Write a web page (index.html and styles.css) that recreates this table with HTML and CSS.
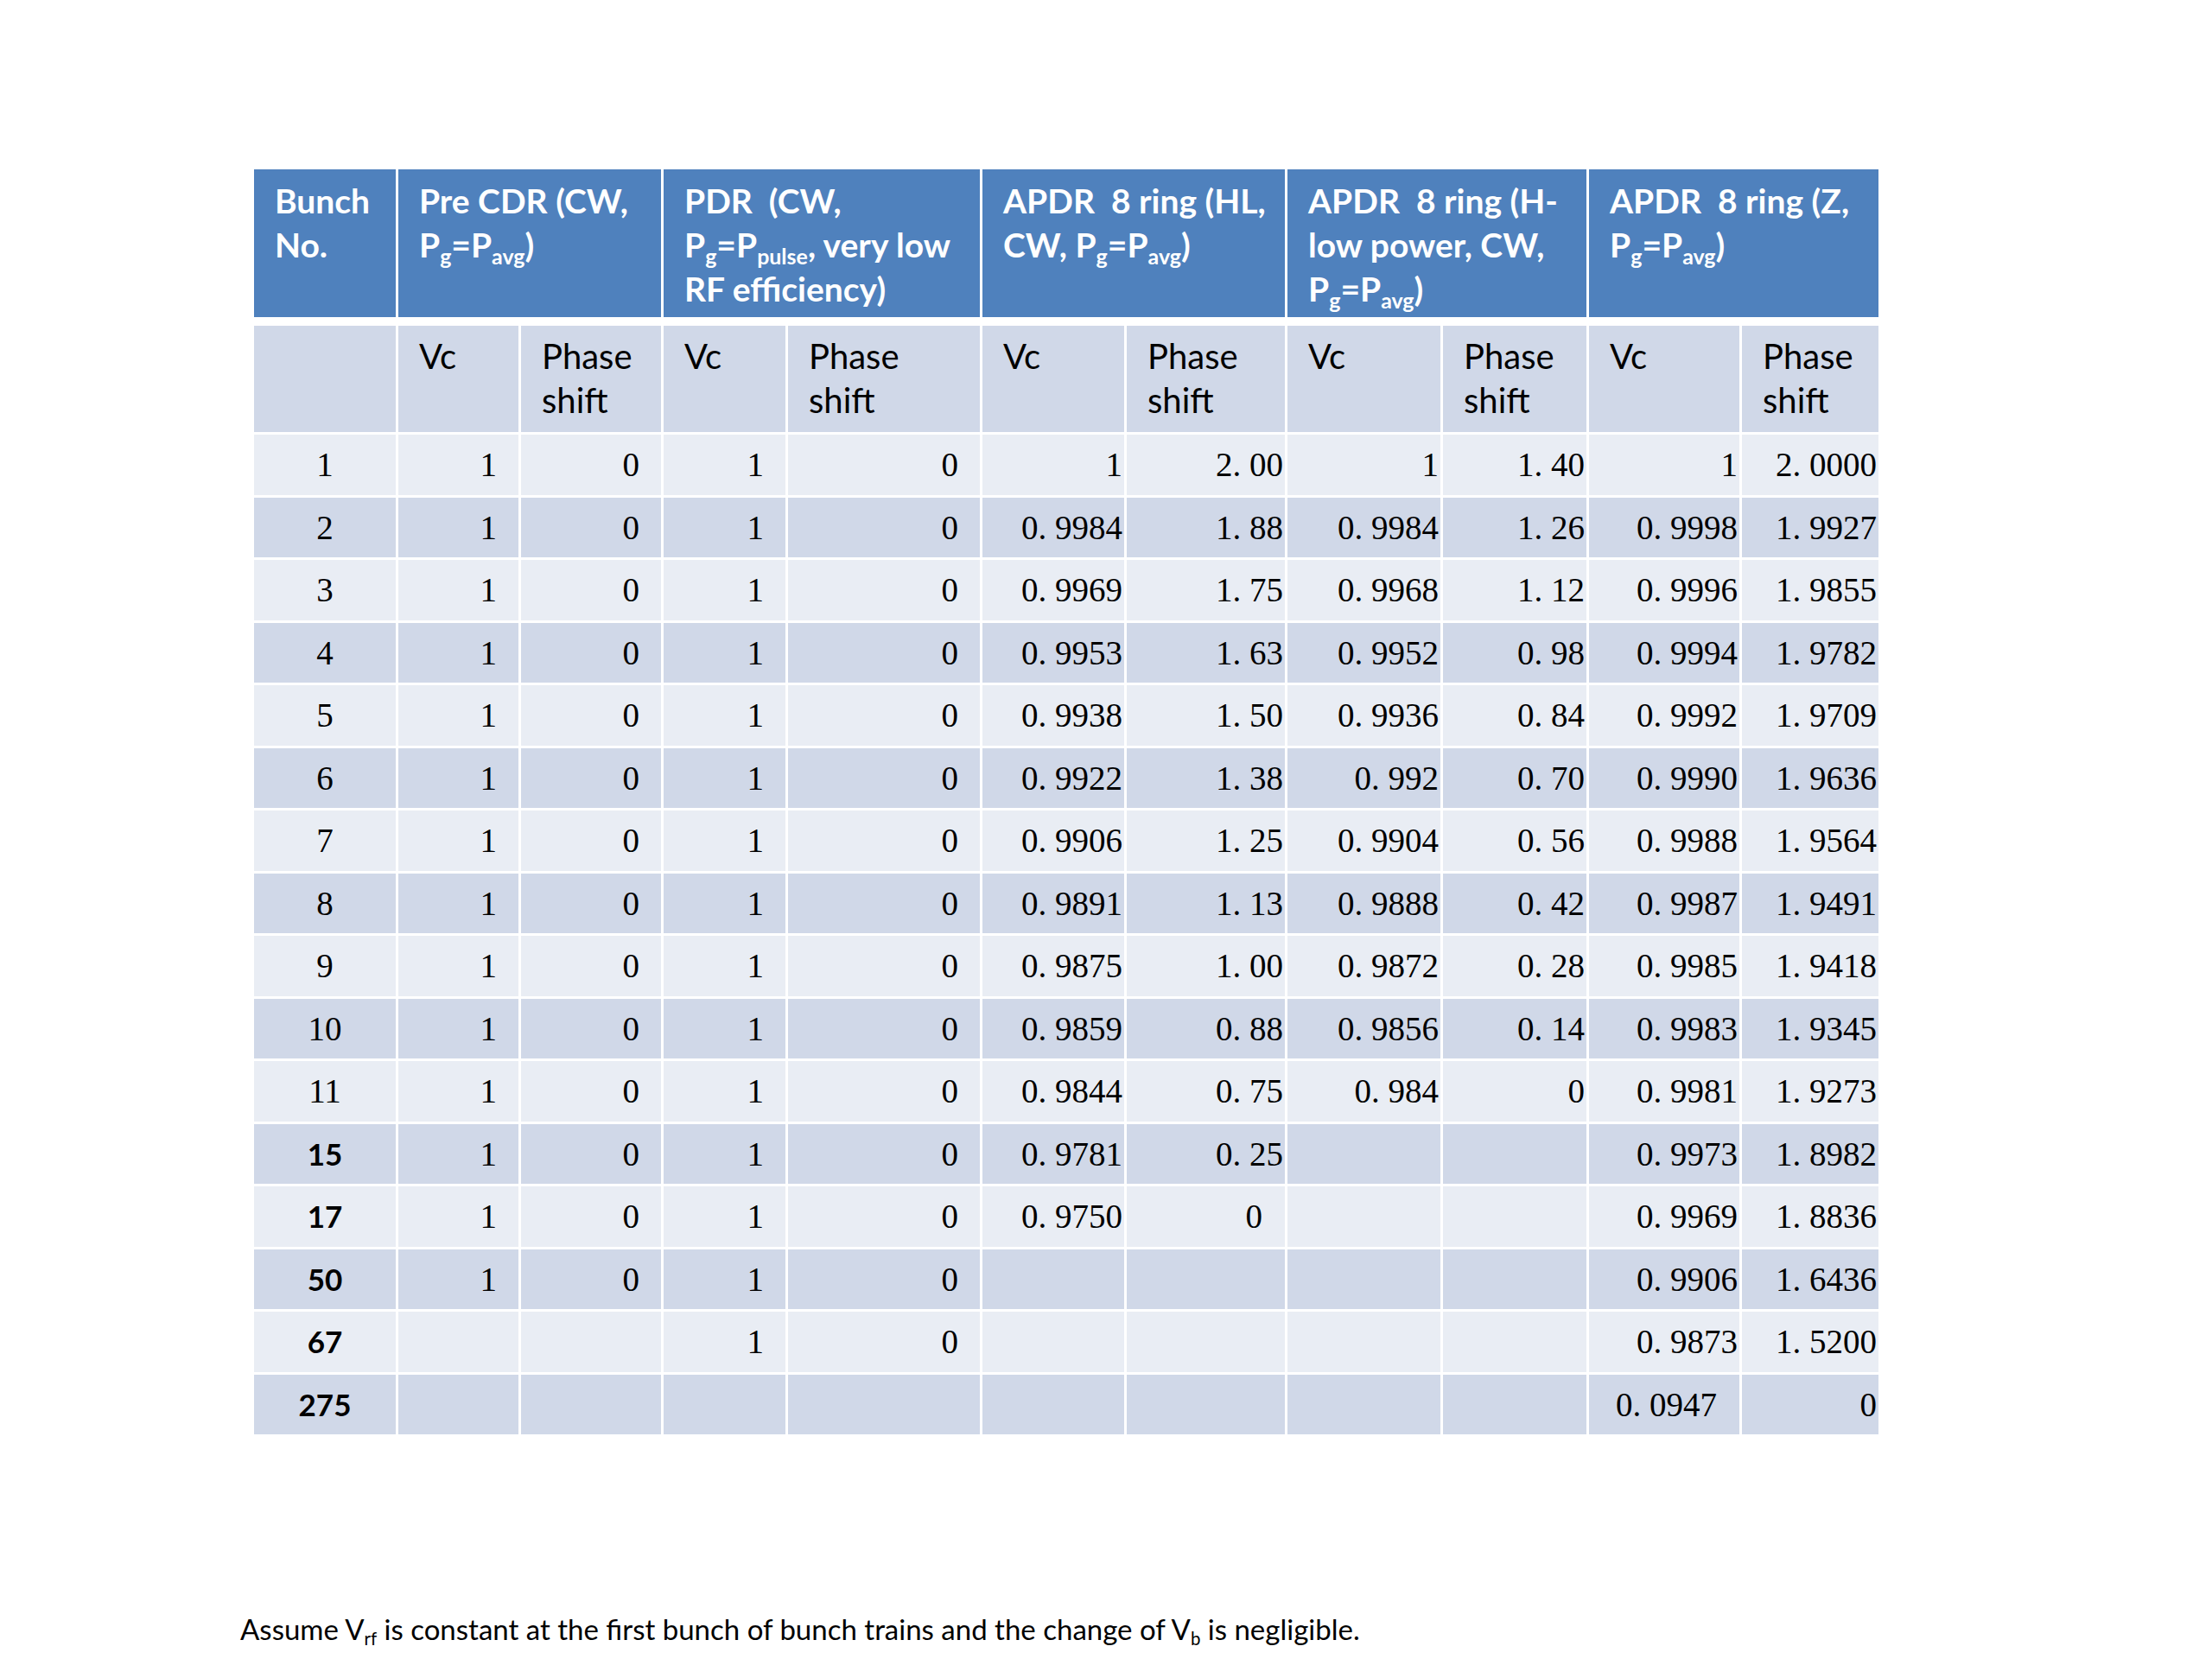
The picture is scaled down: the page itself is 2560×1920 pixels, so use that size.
FILE: index.html
```html
<!DOCTYPE html>
<html lang="en">
<head>
<meta charset="utf-8">
<title>Bunch table</title>
<link rel="stylesheet" href="styles.css">
</head>
<body>
<main class="slide">
<table class="data">
<colgroup>
<col class="w-bn"><col class="w-2"><col class="w-3"><col class="w-4"><col class="w-5"><col class="w-6"><col class="w-7"><col class="w-8"><col class="w-9"><col class="w-10"><col class="w-11">
</colgroup>
<thead>
<tr class="grp">
<th>Bunch<br>No.</th>
<th colspan="2">Pre CDR (CW,<br>P<sub>g</sub>=P<sub>avg</sub>)</th>
<th colspan="2">PDR&nbsp; (CW,<br>P<sub>g</sub>=P<sub>pulse</sub>, very low<br>RF efficiency)</th>
<th colspan="2">APDR&nbsp; 8 ring (HL,<br>CW, P<sub>g</sub>=P<sub>avg</sub>)</th>
<th colspan="2">APDR&nbsp; 8 ring (H-<br>low power, CW,<br>P<sub>g</sub>=P<sub>avg</sub>)</th>
<th colspan="2">APDR&nbsp; 8 ring (Z,<br>P<sub>g</sub>=P<sub>avg</sub>)</th>
</tr>
<tr class="sub">
<th></th>
<th>Vc</th><th>Phase<br>shift</th>
<th>Vc</th><th>Phase<br>shift</th>
<th>Vc</th><th>Phase<br>shift</th>
<th>Vc</th><th>Phase<br>shift</th>
<th>Vc</th><th>Phase<br>shift</th>
</tr>
</thead>
<tbody>
<tr class="odd"><td class="bn">1</td><td>1</td><td>0</td><td>1</td><td>0</td><td>1</td><td>2<span class="dt">.</span>00</td><td>1</td><td>1<span class="dt">.</span>40</td><td>1</td><td>2<span class="dt">.</span>0000</td></tr>
<tr class="even"><td class="bn">2</td><td>1</td><td>0</td><td>1</td><td>0</td><td>0<span class="dt">.</span>9984</td><td>1<span class="dt">.</span>88</td><td>0<span class="dt">.</span>9984</td><td>1<span class="dt">.</span>26</td><td>0<span class="dt">.</span>9998</td><td>1<span class="dt">.</span>9927</td></tr>
<tr class="odd"><td class="bn">3</td><td>1</td><td>0</td><td>1</td><td>0</td><td>0<span class="dt">.</span>9969</td><td>1<span class="dt">.</span>75</td><td>0<span class="dt">.</span>9968</td><td>1<span class="dt">.</span>12</td><td>0<span class="dt">.</span>9996</td><td>1<span class="dt">.</span>9855</td></tr>
<tr class="even"><td class="bn">4</td><td>1</td><td>0</td><td>1</td><td>0</td><td>0<span class="dt">.</span>9953</td><td>1<span class="dt">.</span>63</td><td>0<span class="dt">.</span>9952</td><td>0<span class="dt">.</span>98</td><td>0<span class="dt">.</span>9994</td><td>1<span class="dt">.</span>9782</td></tr>
<tr class="odd"><td class="bn">5</td><td>1</td><td>0</td><td>1</td><td>0</td><td>0<span class="dt">.</span>9938</td><td>1<span class="dt">.</span>50</td><td>0<span class="dt">.</span>9936</td><td>0<span class="dt">.</span>84</td><td>0<span class="dt">.</span>9992</td><td>1<span class="dt">.</span>9709</td></tr>
<tr class="even"><td class="bn">6</td><td>1</td><td>0</td><td>1</td><td>0</td><td>0<span class="dt">.</span>9922</td><td>1<span class="dt">.</span>38</td><td>0<span class="dt">.</span>992</td><td>0<span class="dt">.</span>70</td><td>0<span class="dt">.</span>9990</td><td>1<span class="dt">.</span>9636</td></tr>
<tr class="odd"><td class="bn">7</td><td>1</td><td>0</td><td>1</td><td>0</td><td>0<span class="dt">.</span>9906</td><td>1<span class="dt">.</span>25</td><td>0<span class="dt">.</span>9904</td><td>0<span class="dt">.</span>56</td><td>0<span class="dt">.</span>9988</td><td>1<span class="dt">.</span>9564</td></tr>
<tr class="even"><td class="bn">8</td><td>1</td><td>0</td><td>1</td><td>0</td><td>0<span class="dt">.</span>9891</td><td>1<span class="dt">.</span>13</td><td>0<span class="dt">.</span>9888</td><td>0<span class="dt">.</span>42</td><td>0<span class="dt">.</span>9987</td><td>1<span class="dt">.</span>9491</td></tr>
<tr class="odd"><td class="bn">9</td><td>1</td><td>0</td><td>1</td><td>0</td><td>0<span class="dt">.</span>9875</td><td>1<span class="dt">.</span>00</td><td>0<span class="dt">.</span>9872</td><td>0<span class="dt">.</span>28</td><td>0<span class="dt">.</span>9985</td><td>1<span class="dt">.</span>9418</td></tr>
<tr class="even"><td class="bn">10</td><td>1</td><td>0</td><td>1</td><td>0</td><td>0<span class="dt">.</span>9859</td><td>0<span class="dt">.</span>88</td><td>0<span class="dt">.</span>9856</td><td>0<span class="dt">.</span>14</td><td>0<span class="dt">.</span>9983</td><td>1<span class="dt">.</span>9345</td></tr>
<tr class="odd"><td class="bn">11</td><td>1</td><td>0</td><td>1</td><td>0</td><td>0<span class="dt">.</span>9844</td><td>0<span class="dt">.</span>75</td><td>0<span class="dt">.</span>984</td><td>0</td><td>0<span class="dt">.</span>9981</td><td>1<span class="dt">.</span>9273</td></tr>
<tr class="even"><td class="bn sans">15</td><td>1</td><td>0</td><td>1</td><td>0</td><td>0<span class="dt">.</span>9781</td><td>0<span class="dt">.</span>25</td><td></td><td></td><td>0<span class="dt">.</span>9973</td><td>1<span class="dt">.</span>8982</td></tr>
<tr class="odd"><td class="bn sans">17</td><td>1</td><td>0</td><td>1</td><td>0</td><td>0<span class="dt">.</span>9750</td><td class="inset">0</td><td></td><td></td><td>0<span class="dt">.</span>9969</td><td>1<span class="dt">.</span>8836</td></tr>
<tr class="even"><td class="bn sans">50</td><td>1</td><td>0</td><td>1</td><td>0</td><td></td><td></td><td></td><td></td><td>0<span class="dt">.</span>9906</td><td>1<span class="dt">.</span>6436</td></tr>
<tr class="odd"><td class="bn sans">67</td><td></td><td></td><td>1</td><td>0</td><td></td><td></td><td></td><td></td><td>0<span class="dt">.</span>9873</td><td>1<span class="dt">.</span>5200</td></tr>
<tr class="even"><td class="bn sans">275</td><td></td><td></td><td></td><td></td><td></td><td></td><td></td><td></td><td class="inset">0<span class="dt">.</span>0947</td><td>0</td></tr>
</tbody>
</table>
<p class="note">Assume V<sub>rf</sub> is constant at the first bunch of bunch trains and the change of V<sub>b</sub> is negligible.</p>
</main>
</body>
</html>
```

FILE: styles.css
```css
html, body {
  margin: 0;
  padding: 0;
  background: #ffffff;
}

body {
  font-family: Lato, "Open Sans", sans-serif;
  color: #000000;
}

.slide {
  width: 2560px;
  height: 1920px;
  box-sizing: border-box;
  padding: 193px 0 0 278px;
}

.data {
  margin-left: 13px;
  border-collapse: separate;
  border-spacing: 3px;
  table-layout: fixed;
  width: 1886px;
}

.w-bn { width: 164px; }
.w-2 { width: 139px; }
.w-3 { width: 162px; }
.w-4 { width: 141px; }
.w-5 { width: 222px; }
.w-6 { width: 164px; }
.w-7 { width: 183px; }
.w-8 { width: 177px; }
.w-9 { width: 166px; }
.w-10 { width: 174px; }
.w-11 { width: 158px; }

.data th,
.data td {
  padding: 0;
  overflow: visible;
}

.data sub {
  font-size: 0.64em;
  line-height: 0;
  vertical-align: -0.34em;
}

/* group header row */
.grp {
  height: 178px;
}

.grp th {
  background: #4f81bd;
  color: #ffffff;
  font-size: 39px;
  font-weight: 700;
  line-height: 51px;
  text-align: left;
  vertical-align: top;
  white-space: nowrap;
  padding: 11px 6px 0 24px;
  border-bottom: 7px solid #ffffff;
}

/* column header row */
.sub {
  height: 123px;
}

.sub th {
  background: #d0d8e8;
  font-size: 40px;
  font-weight: 400;
  line-height: 51px;
  text-align: left;
  vertical-align: top;
  white-space: nowrap;
  padding: 10px 6px 0 24px;
}

/* body rows */
.data tbody tr {
  height: 69.5px;
}

.odd td { background: #e9edf4; }
.even td { background: #d0d8e8; }

.data td {
  font-family: "Liberation Serif", "Times New Roman", serif;
  font-size: 39px;
  line-height: 45px;
  text-align: right;
  vertical-align: middle;
  padding-right: 25px;
  white-space: nowrap;
}

.data td:nth-child(n+6) {
  padding-right: 2px;
}

.data td.inset {
  padding-right: 26px;
}

.data td.bn {
  text-align: center;
  padding: 0;
}

.data td.sans {
  font-family: Lato, "Open Sans", sans-serif;
  font-size: 35px;
  font-weight: 700;
}

.dt {
  display: inline-block;
  width: 0.5em;
  text-align: left;
}

.note {
  margin: 202px 0 0 0;
  font-size: 33px;
  line-height: 40px;
}

.note sub {
  font-size: 0.62em;
  line-height: 0;
  vertical-align: -0.3em;
}
```
